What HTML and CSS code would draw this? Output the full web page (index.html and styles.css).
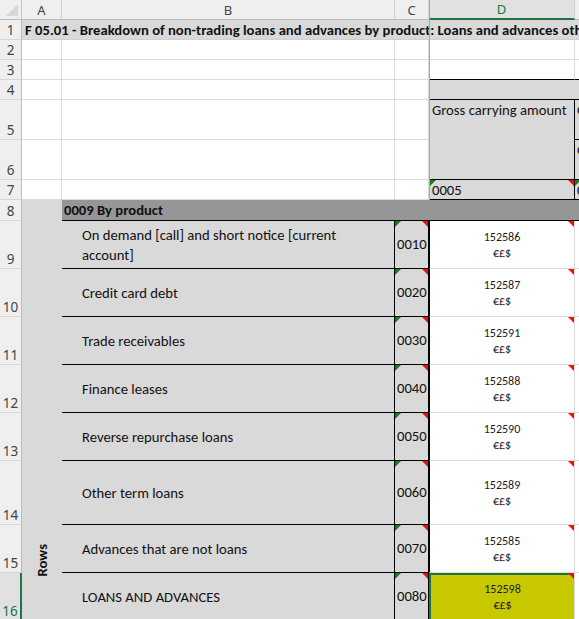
FILE: index.html
```html
<!DOCTYPE html>
<html>
<head>
<meta charset="utf-8">
<link rel="stylesheet" href="styles.css">
</head>
<body>
<div class="sheet">
  <div class="corner"><span class="corner-tri"></span></div>
  <div class="colhead">A</div>
  <div class="colhead">B</div>
  <div class="colhead">C</div>
  <div class="colhead sel">D</div>
  <div class="colhead">E</div>

  <div class="rowhead">1</div>
  <div class="cell title span5">F 05.01 - Breakdown of non-trading loans and advances by product: Loans and advances other than held for trading</div>

  <div class="rowhead">2</div>
  <div class="cell"></div><div class="cell"></div><div class="cell"></div><div class="cell dcol"></div><div class="cell"></div>

  <div class="rowhead">3</div>
  <div class="cell"></div><div class="cell"></div><div class="cell"></div><div class="cell dcol bb"></div><div class="cell bb"></div>

  <div class="rowhead">4</div>
  <div class="cell"></div><div class="cell"></div><div class="cell"></div><div class="cell dcol hdr bb span2"></div>

  <div class="rowhead">5</div>
  <div class="cell"></div><div class="cell"></div><div class="cell"></div>
  <div class="cell dcol hdr bb br rspan2 top">Gross carrying amount</div>
  <div class="cell hdr bb top">Of which</div>

  <div class="rowhead">6</div>
  <div class="cell"></div><div class="cell"></div><div class="cell"></div>
  <div class="cell hdr bb top">Of which</div>

  <div class="rowhead">7</div>
  <div class="cell"></div><div class="cell"></div><div class="cell"></div>
  <div class="cell dcol hdr bb br mid tg tr">0005</div>
  <div class="cell hdr bb mid tg">0010</div>

  <div class="rowhead">8</div>
  <div class="cell rows-cell rspan9"><span class="rows-label">Rows</span></div>
  <div class="cell band span4 mid">0009 By product</div>

  <div class="rowhead">9</div>
  <div class="cell label">On demand [call] and short notice [current<br>account]</div>
  <div class="cell code tg tr">0010</div>
  <div class="cell value tr">152586<br>€£$</div>
  <div class="cell ecell"></div>

  <div class="rowhead">10</div>
  <div class="cell label">Credit card debt</div>
  <div class="cell code tg tr">0020</div>
  <div class="cell value tr">152587<br>€£$</div>
  <div class="cell ecell"></div>

  <div class="rowhead">11</div>
  <div class="cell label">Trade receivables</div>
  <div class="cell code tg tr">0030</div>
  <div class="cell value tr">152591<br>€£$</div>
  <div class="cell ecell"></div>

  <div class="rowhead">12</div>
  <div class="cell label">Finance leases</div>
  <div class="cell code tg tr">0040</div>
  <div class="cell value tr">152588<br>€£$</div>
  <div class="cell ecell"></div>

  <div class="rowhead">13</div>
  <div class="cell label">Reverse repurchase loans</div>
  <div class="cell code tg tr">0050</div>
  <div class="cell value tr">152590<br>€£$</div>
  <div class="cell ecell"></div>

  <div class="rowhead">14</div>
  <div class="cell label">Other term loans</div>
  <div class="cell code tg tr">0060</div>
  <div class="cell value tr">152589<br>€£$</div>
  <div class="cell ecell"></div>

  <div class="rowhead">15</div>
  <div class="cell label">Advances that are not loans</div>
  <div class="cell code tg tr">0070</div>
  <div class="cell value tr">152585<br>€£$</div>
  <div class="cell ecell"></div>

  <div class="rowhead selrow">16</div>
  <div class="cell label">LOANS AND ADVANCES</div>
  <div class="cell code tg tr">0080</div>
  <div class="cell value active tr">152598<br>€£$</div>
  <div class="cell ecell"></div>

  <div class="freeze"></div>
</div>
</body>
</html>
```

FILE: styles.css
```css
* { box-sizing: border-box; }
html, body { margin: 0; padding: 0; }
body {
  width: 579px;
  height: 619px;
  overflow: hidden;
  background: #fff;
  font-family: Carlito, Lato, "Liberation Sans", sans-serif;
  font-size: 14.67px;
  color: #111;
}
.sheet {
  position: relative;
  display: grid;
  width: 720px;
  grid-template-columns: 22px 40px 333px 34px 146px 145px;
  grid-template-rows: 20px 20px 20px 20px 20px 40px 40px 20px 21px 48px 48px 48px 48px 48px 64px 48px 48px;
}
.corner {
  position: relative;
  background: #efefef;
  border-right: 1px solid #c8c8c8;
  border-bottom: 1px solid #bcbcbc;
}
.corner-tri {
  position: absolute;
  right: 3px;
  bottom: 3px;
  width: 0;
  height: 0;
  border-bottom: 12px solid #d6d6d6;
  border-left: 12px solid transparent;
}
.colhead {
  background: #efefef;
  border-right: 1px solid #d2d2d2;
  border-bottom: 1px solid #bcbcbc;
  font-family: "Noto Sans", "DejaVu Sans", sans-serif;
  font-size: 13px;
  color: #444;
  display: flex;
  align-items: center;
  justify-content: center;
}
.colhead.sel {
  background: #e1e1e1;
  color: #217346;
  border-bottom: 2px solid #217346;
}
.rowhead {
  background: #efefef;
  border-right: 1px solid #bcbcbc;
  border-bottom: 1px solid #d6d6d6;
  font-family: "Noto Sans", "DejaVu Sans", sans-serif;
  font-size: 13.5px;
  line-height: 16px;
  color: #444;
  display: flex;
  align-items: flex-end;
  justify-content: center;
  padding-bottom: 1px;
}
.rowhead.selrow {
  background: #e1e1e1;
  color: #217346;
  border-right: 2px solid #217346;
}
.cell {
  position: relative;
  border-right: 1px solid #dadada;
  border-bottom: 1px solid #dadada;
  white-space: nowrap;
  overflow: hidden;
  padding: 0 2px;
  line-height: 19px;
}
.span2 { grid-column: span 2; }
.span4 { grid-column: span 4; }
.span5 { grid-column: span 5; }
.rspan2 { grid-row: span 2; }
.rspan9 { grid-row: span 9; }
.mid { display: flex; align-items: center; padding-top: 1px; }
.top { padding-top: 1px; }

.title {
  background: #d9d9d9;
  border-right: none;
  border-bottom: 1px solid #d0d0d0;
  font-weight: bold;
  padding-left: 3px;
  padding-top: 1px;
  overflow: visible;
}
.dcol { border-left: 1px solid #a6a6a6; }
.hdr { background: #d9d9d9; }
.bb { border-bottom: 1px solid #000; }
.br { border-right: 1px solid #000; }

.rows-cell {
  background: #d9d9d9;
  border-right: none;
  border-bottom: none;
  display: flex;
  flex-direction: column;
  justify-content: flex-end;
  align-items: center;
  padding-bottom: 44px;
}
.rows-label {
  writing-mode: vertical-rl;
  transform: rotate(180deg);
  font-weight: bold;
  line-height: 16px;
}
.band {
  background: #969696;
  border-right: none;
  border-bottom: 1px solid #000;
  font-weight: bold;
}
.label {
  background: #d9d9d9;
  border-right: 1px solid #000;
  border-bottom: 1px solid #000;
  padding-left: 20px;
  display: flex;
  align-items: center;
  line-height: 20px;
}
.code {
  background: #d9d9d9;
  border-right: 1px solid #000;
  border-bottom: 1px solid #000;
  display: flex;
  align-items: center;
}
.value {
  border-left: 1px solid #000;
  border-bottom: 1px solid #dadada;
  border-right: 1px solid #dadada;
  font-size: 12px;
  line-height: 16px;
  text-align: center;
  display: flex;
  flex-direction: column;
  justify-content: center;
  white-space: normal;
  color: #1a1a2a;
}
.value.active {
  background: #c8c800;
  border-left: 2px solid #217346;
  box-shadow: inset 0 2px 0 #217346;
}
.ecell { border-right: none; }

.tg::before {
  content: "";
  position: absolute;
  left: 0;
  top: 0;
  width: 0;
  height: 0;
  border-top: 6px solid #1f7a1f;
  border-right: 6px solid transparent;
}
.tr::after {
  content: "";
  position: absolute;
  right: 0;
  top: 0;
  width: 0;
  height: 0;
  border-top: 6px solid #e81010;
  border-left: 6px solid transparent;
}
.freeze {
  position: absolute;
  left: 429px;
  top: 0;
  width: 1px;
  height: 200px;
  background: #a6a6a6;
}
```
